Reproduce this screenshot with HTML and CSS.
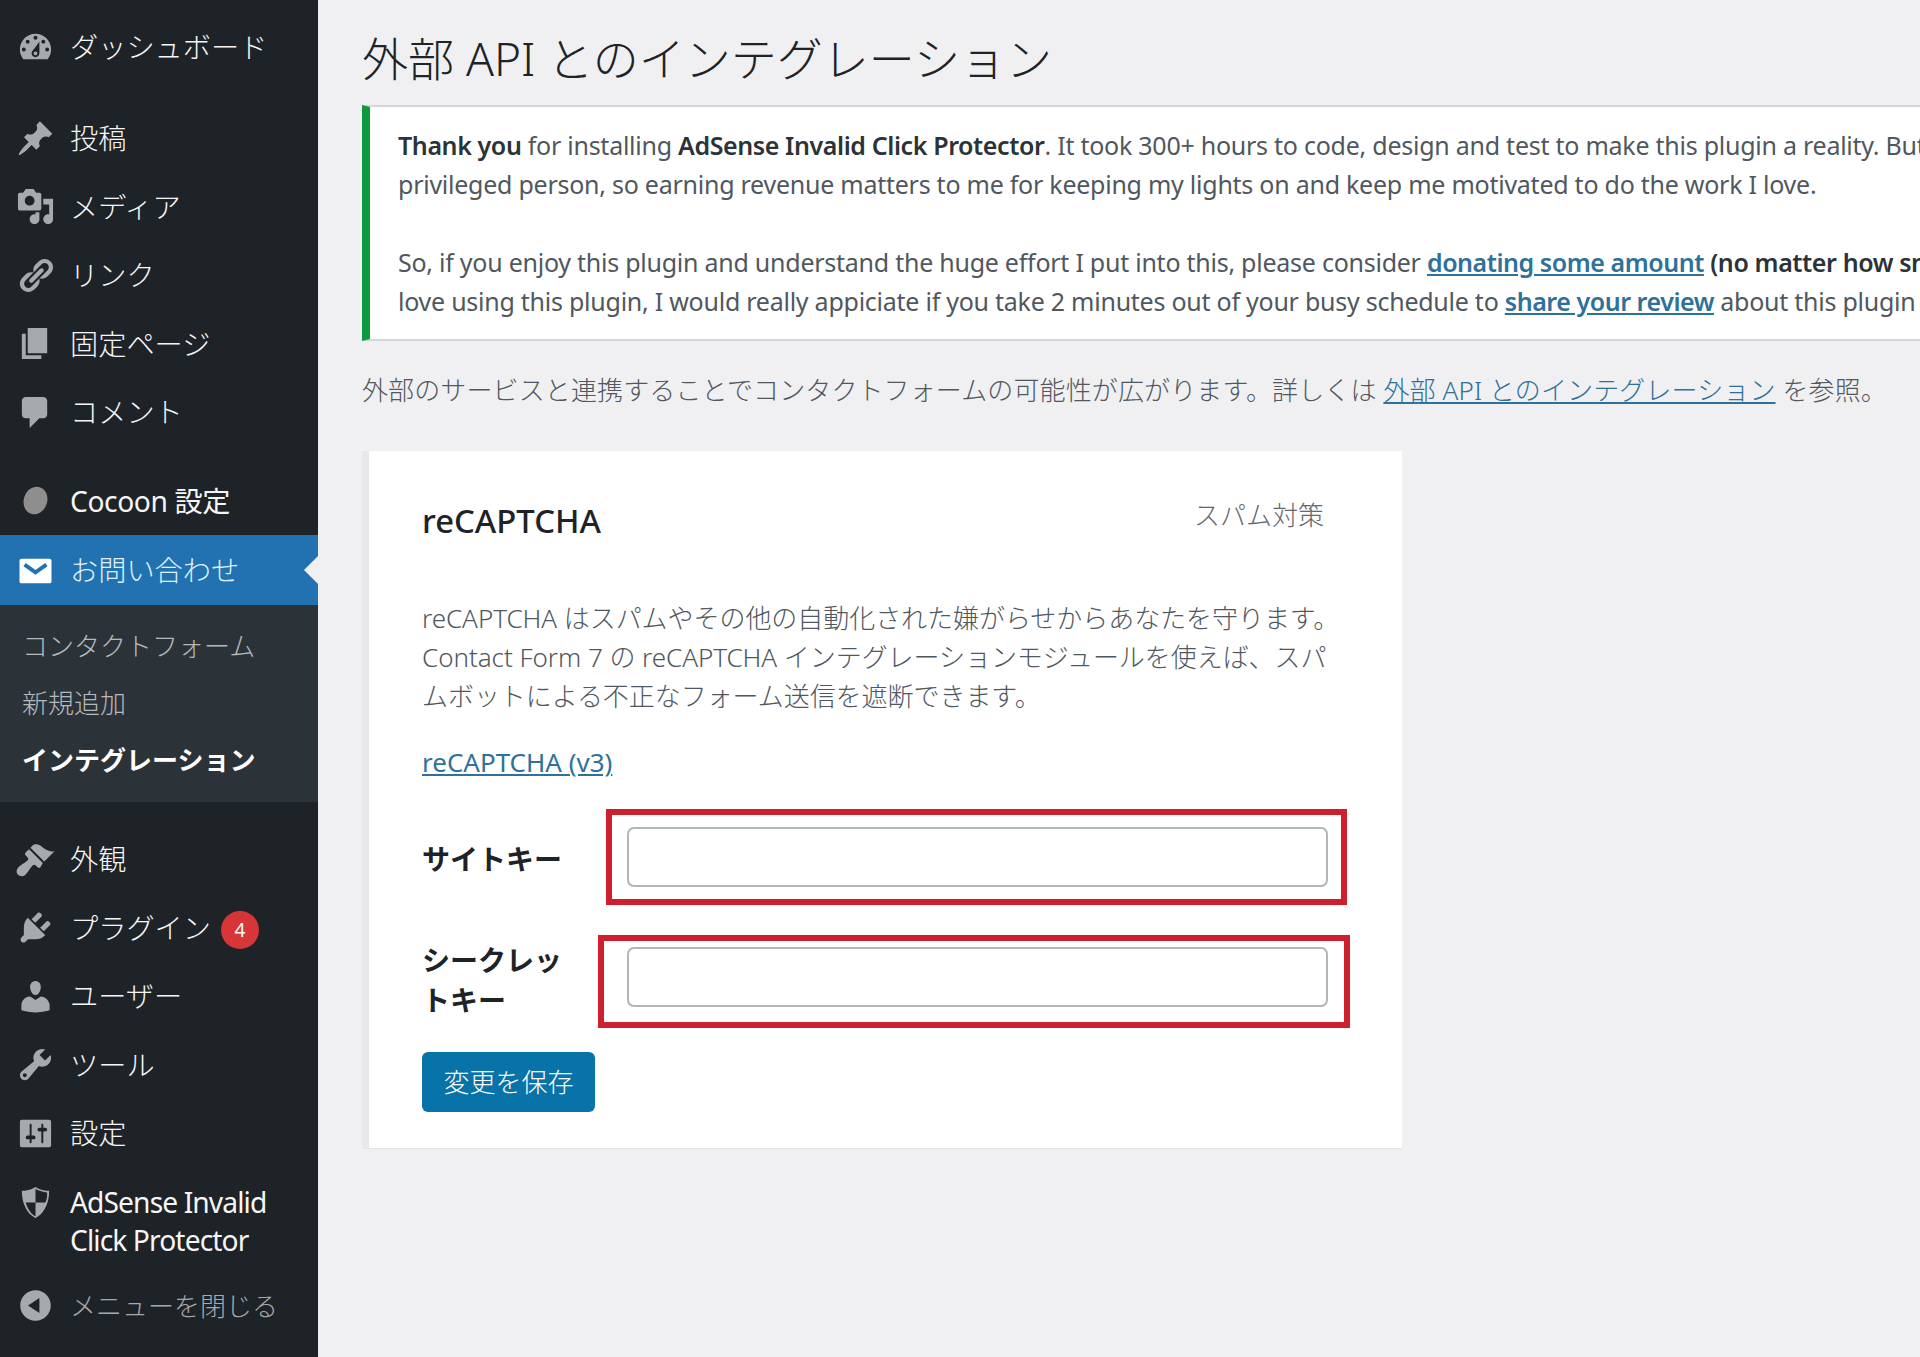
FILE: index.html
```html
<!DOCTYPE html>
<html lang="ja">
<head>
<meta charset="utf-8">
<title>外部 API とのインテグレーション</title>
<link rel="stylesheet" href="styles.css">
</head>
<body>
<div class="app">
<aside class="side">
  <nav class="menu">
    <a class="item item-first"><svg class="ico" viewBox="0 0 20 20"><path d="M3.76 16h12.48c1.1-1.37 1.76-3.11 1.76-5 0-4.42-3.58-8-8-8s-8 3.58-8 8c0 1.89.66 3.63 1.76 5zM10 4c.55 0 1 .45 1 1s-.45 1-1 1-1-.45-1-1 .45-1 1-1zM6 6c.55 0 1 .45 1 1s-.45 1-1 1-1-.45-1-1 .45-1 1-1zm8 0c.55 0 1 .45 1 1s-.45 1-1 1-1-.45-1-1 .45-1 1-1zm-5.37 5.55L12 7v6c0 1.1-.9 2-2 2s-2-.9-2-2c0-.57.24-1.08.63-1.45zM4 10c.55 0 1 .45 1 1s-.45 1-1 1-1-.45-1-1 .45-1 1-1zm12 0c.55 0 1 .45 1 1s-.45 1-1 1-1-.45-1-1 .45-1 1-1zm-5 3c0-.55-.45-1-1-1s-1 .45-1 1 .45 1 1 1 1-.45 1-1z"/></svg><span>ダッシュボード</span></a>
    <a class="item item-gap"><svg class="ico" viewBox="0 0 20 20"><path d="M10.44 3.02l1.82-1.82 6.36 6.35-1.83 1.82c-1.05-.68-2.48-.57-3.41.36l-.75.75c-.92.93-1.04 2.35-.35 3.41l-1.83 1.82-2.41-2.41-2.8 2.79c-.42.42-3.38 2.71-3.8 2.29s1.86-3.39 2.28-3.81l2.79-2.79L4.1 9.36l1.83-1.82c1.05.69 2.48.57 3.4-.36l.75-.75c.93-.92 1.05-2.35.36-3.41z"/></svg><span>投稿</span></a>
    <a class="item"><svg class="ico" viewBox="0 0 20 20"><path d="M13 11V4c0-.55-.45-1-1-1h-1.67L9 1H5L3.67 3H2c-.55 0-1 .45-1 1v7c0 .55.45 1 1 1h10c.55 0 1-.45 1-1zM7 4.5c1.38 0 2.5 1.12 2.5 2.5S8.38 9.5 7 9.5 4.5 8.38 4.5 7 5.62 4.5 7 4.5zM14 6h5v10.5c0 1.38-1.12 2.5-2.5 2.5S14 17.88 14 16.5s1.12-2.5 2.5-2.5c.17 0 .34.02.5.05V9h-3V6zm-4 8.05V13h2v3.5c0 1.38-1.12 2.5-2.5 2.5S7 17.88 7 16.5 8.12 14 9.5 14c.17 0 .34.02.5.05z"/></svg><span>メディア</span></a>
    <a class="item"><svg class="ico" viewBox="0 0 20 20"><path d="M17.74 2.76c1.68 1.69 1.68 4.41 0 6.1l-1.53 1.52c-1.12 1.12-2.7 1.47-4.14 1.09l2.62-2.61.76-.77.76-.76c.84-.84.84-2.2 0-3.04-.84-.85-2.2-.85-3.04 0l-.77.76-3.38 3.38c-.37-1.44-.02-3.02 1.1-4.14l1.52-1.53c1.69-1.68 4.42-1.68 6.1 0zM8.59 13.43l5.34-5.34c.42-.42.42-1.1 0-1.52-.44-.43-1.13-.39-1.53 0l-5.33 5.34c-.42.42-.42 1.1 0 1.52.44.43 1.13.39 1.52 0zm-.76 2.29l4.14-4.15c.38 1.44.03 3.02-1.09 4.14l-1.52 1.53c-1.69 1.68-4.41 1.68-6.1 0-1.68-1.68-1.68-4.42 0-6.1l1.53-1.52c1.12-1.12 2.7-1.47 4.14-1.1l-4.14 4.15c-.85.84-.85 2.2 0 3.05.84.84 2.2.84 3.04 0z"/></svg><span>リンク</span></a>
    <a class="item"><svg class="ico" viewBox="0 0 20 20"><path d="M6 15V2h10v13H6zm-1 1h8v2H3V5h2v11z"/></svg><span>固定ページ</span></a>
    <a class="item"><svg class="ico" viewBox="0 0 20 20"><path d="M5 2h9c1.1 0 2 .9 2 2v7c0 1.1-.9 2-2 2h-2l-5 5v-5H5c-1.1 0-2-.9-2-2V4c0-1.1.9-2 2-2z"/></svg><span>コメント</span></a>
    <a class="item item-gap-b"><svg class="ico ico-cocoon" viewBox="0 0 20 20"><ellipse cx="10" cy="10" rx="6" ry="7.2" transform="rotate(18 10 10)"/></svg><span class="latin">Cocoon 設定</span></a>
    <a class="item item-current"><svg class="ico ico-white" viewBox="0 0 20 20"><rect x="1.8" y="4" width="16.4" height="12.6" rx="1"/><path class="ico-flap" d="M4.4 7l5.6 4 5.6-4"/></svg><span>お問い合わせ</span><i class="pointer"></i></a>
    <div class="sub">
      <a class="sub-item">コンタクトフォーム</a>
      <a class="sub-item">新規追加</a>
      <a class="sub-item sub-current">インテグレーション</a>
    </div>
    <a class="item item-after-sub"><svg class="ico" viewBox="0 0 20 20"><path d="M14.48 11.06L7.41 3.99l1.5-1.5c.5-.56 2.3-.47 3.51.32 1.21.8 1.43 1.28 2.91 2.1 1.18.64 2.45 1.26 4.45.85zm-.71.71L6.7 4.7 4.93 6.47c-.39.39-.39 1.02 0 1.41l1.06 1.06c.39.39.39 1.03 0 1.42-.6.6-1.43 1.11-2.21 1.7-.75.53-1.63 1.04-2.39 1.8-1.4 1.39-1.33 3.01-.32 4.02 1.01 1 2.64 1.08 4.03-.32.76-.76 1.27-1.64 1.81-2.39.58-.78 1.09-1.61 1.69-2.21.39-.39 1.02-.39 1.41 0l1.07 1.06c.39.39 1.02.39 1.41 0z"/></svg><span>外観</span></a>
    <a class="item"><svg class="ico" viewBox="0 0 20 20"><path d="M13.11 4.36L9.87 7.6 8 5.73l3.24-3.24c.35-.34 1.05-.2 1.56.32.52.51.66 1.21.31 1.55zm-8 1.77l.91-1.12 9.01 9.01-1.19.84c-.71.71-2.63 1.16-3.82 1.16H6.14L4.9 17.26c-.59.59-1.54.59-2.12 0-.59-.58-.59-1.53 0-2.12l1.24-1.24v-3.88c0-1.13.4-3.19 1.09-3.89zm7.26 3.97l3.24-3.24c.34-.35 1.04-.21 1.55.31.52.51.66 1.21.31 1.55l-3.24 3.25z"/></svg><span>プラグイン</span><b class="badge">4</b></a>
    <a class="item"><svg class="ico" viewBox="0 0 20 20"><path d="M10 9.25c-2.27 0-2.73-3.44-2.73-3.44C7 4.02 7.82 2 9.97 2c2.16 0 2.98 2.02 2.71 3.81 0 0-.41 3.44-2.68 3.44zm0 2.57L12.72 10c2.39 0 4.52 2.33 4.52 4.53v2.49s-3.65 1.13-7.24 1.13c-3.65 0-7.24-1.13-7.24-1.13v-2.49c0-2.25 1.94-4.48 4.47-4.48z"/></svg><span>ユーザー</span></a>
    <a class="item"><svg class="ico" viewBox="0 0 20 20"><path d="M16.68 9.77c-1.34 1.34-3.3 1.67-4.95.99l-5.41 6.52c-.99.99-2.59.99-3.58 0s-.99-2.59 0-3.57l6.52-5.42c-.68-1.65-.35-3.61.99-4.95 1.28-1.28 3.12-1.62 4.72-1.06l-2.89 2.89 2.82 2.82 2.86-2.87c.53 1.58.18 3.39-1.08 4.67zM3.81 16.21c.4.39 1.04.39 1.43 0 .4-.4.4-1.04 0-1.43-.39-.4-1.03-.4-1.43 0-.39.39-.39 1.03 0 1.43z"/></svg><span>ツール</span></a>
    <a class="item"><svg class="ico" viewBox="0 0 20 20"><path d="M18 16V4c0-.55-.45-1-1-1H3c-.55 0-1 .45-1 1v12c0 .55.45 1 1 1h14c.55 0 1-.45 1-1zM8 11h1c.55 0 1 .45 1 1s-.45 1-1 1H8v1.5c0 .28-.22.5-.5.5s-.5-.22-.5-.5V13H6c-.55 0-1-.45-1-1s.45-1 1-1h1V5.5c0-.28.22-.5.5-.5s.5.22.5.5V11zm5-2h-1c-.55 0-1-.45-1-1s.45-1 1-1h1V5.5c0-.28.22-.5.5-.5s.5.22.5.5V7h1c.55 0 1 .45 1 1s-.45 1-1 1h-1v5.5c0 .28-.22.5-.5.5s-.5-.22-.5-.5V9z"/></svg><span>設定</span></a>
    <a class="item item-two"><svg class="ico" viewBox="0 0 20 20"><path fill-rule="evenodd" d="M10 2s3 2 7 2c0 11-7 14-7 14S3 15 3 4c4 0 7-2 7-2zM10 10h5s1-1 1-5c0 0-5-1-6-2zM10 10H5c1 4 4 7 5 7z"/></svg><span class="latin-tight">AdSense Invalid<br>Click Protector</span></a>
    <a class="item item-collapse"><svg class="ico" viewBox="0 0 20 20"><path d="M10 2.16c4.33 0 7.84 3.51 7.84 7.84s-3.51 7.84-7.84 7.84S2.16 14.33 2.16 10 5.71 2.16 10 2.16zm2 11.72V6.12L6.18 9.97z"/></svg><span>メニューを閉じる</span></a>
  </nav>
</aside>
<main class="main">
  <h1 class="title">外部 API とのインテグレーション</h1>
  <section class="notice">
    <p><strong>Thank you</strong> for installing <strong>AdSense Invalid Click Protector</strong>. It took 300+ hours to code, design and test to make this plugin a reality. But<br>privileged person, so earning revenue matters to me for keeping my lights on and keep me motivated to do the work I love.</p>
    <p>So, if you enjoy this plugin and understand the huge effort I put into this, please consider <a class="link link-strong">donating some amount</a> <strong>(no matter how small)</strong><br>love using this plugin, I would really appiciate if you take 2 minutes out of your busy schedule to <a class="link link-strong">share your review</a> about this plugin</p>
  </section>
  <p class="intro">外部のサービスと連携することでコンタクトフォームの可能性が広がります。詳しくは <a class="link">外部 API とのインテグレーション</a> を参照。</p>
  <section class="card">
    <header class="card-head">
      <h2 class="card-title">reCAPTCHA</h2>
      <span class="card-tag">スパム対策</span>
    </header>
    <p class="card-text">reCAPTCHA はスパムやその他の自動化された嫌がらせからあなたを守ります。<br>Contact Form 7 の reCAPTCHA インテグレーションモジュールを使えば、スパ<br>ムボットによる不正なフォーム送信を遮断できます。</p>
    <p class="card-link"><a class="link">reCAPTCHA (v3)</a></p>
    <form class="form">
      <div class="row row-one">
        <label class="label" for="sitekey">サイトキー</label>
        <input class="field" id="sitekey" type="text">
        <i class="mark mark-one"></i>
      </div>
      <div class="row row-two">
        <label class="label" for="secret">シークレッ<br>トキー</label>
        <input class="field" id="secret" type="text">
        <i class="mark mark-two"></i>
      </div>
      <button class="save" type="button">変更を保存</button>
    </form>
  </section>
</main>
</div>
</body>
</html>
```

FILE: styles.css
```css
* { box-sizing: border-box; }
html, body { margin: 0; height: 100%; }
body {
  background: #f0f0f2;
  color: #50575e;
  font-family: "Noto Sans", "Noto Sans CJK JP", sans-serif;
  font-weight: 300;
  overflow: hidden;
}
.app { display: flex; height: 1357px; width: 1920px; overflow: hidden; }

/* sidebar */
.side { width: 318px; flex: none; background: #1d2327; padding-top: 13px; }
.menu { display: flex; flex-direction: column; }
.item {
  position: relative;
  display: flex;
  align-items: center;
  height: 68.5px;
  padding-left: 16px;
  gap: 15px;
  color: #f6f6f7;
  font-size: 28.2px;
  line-height: 38px;
  white-space: nowrap;
}
.item-gap { margin-top: 22.5px; }
.item-gap-b { margin-top: 20px; }
.item-after-sub { margin-top: 23px; }
.latin { font-weight: 400; letter-spacing: -0.4px; }
.latin-tight { font-weight: 400; letter-spacing: -0.9px; }
.ico { width: 39px; height: 39px; flex: none; fill: #a7aaad; }
.ico-cocoon { fill: #8e8e8e; }
.ico-white { fill: #fff; }
.ico-flap { fill: none; stroke: #2271b1; stroke-width: 2; }
.item-current { background: #2271b1; height: 70px; color: #dff1fd; }
.pointer {
  position: absolute;
  right: 0;
  top: 50%;
  margin-top: -14px;
  border: 14px solid transparent;
  border-right-color: #f0f0f2;
  border-left-width: 0;
}
.sub { background: #2c3338; padding: 13px 0 13px; display: flex; flex-direction: column; }
.sub-item {
  height: 57px;
  line-height: 57px;
  padding-left: 22px;
  font-size: 26px;
  color: #b4b9be;
}
.sub-current { color: #fff; font-weight: 700; }
.badge {
  width: 38px;
  height: 38px;
  margin: 4px 0 0 -5px;
  border-radius: 50%;
  background: #d63638;
  color: #fff;
  font-size: 19px;
  line-height: 38px;
  text-align: center;
}
.item-two { align-items: flex-start; height: 104px; padding-top: 15px; }
.item-collapse { color: #a7aaad; font-size: 26px; }

/* main */
.main { flex: 1; min-width: 0; padding: 28px 0 0 44px; overflow: hidden; }
.title {
  margin: 0 0 17px;
  font-size: 46px;
  line-height: 60px;
  font-weight: 300;
  color: #1d2327;
  white-space: nowrap;
}
.notice {
  width: 1600px;
  height: 236px;
  background: #fff;
  border-top: 2px solid #d4d5d6;
  border-bottom: 2px solid #d4d5d6;
  border-left: 8px solid #0d9a3c;
  padding: 19px 0 0 28px;
  font-size: 25px;
  font-weight: 400;
  line-height: 39px;
  letter-spacing: -0.25px;
  white-space: nowrap;
  overflow: hidden;
}
.notice p { margin: 0 0 39px; }
.notice strong { font-weight: 600; letter-spacing: -0.4px; color: #2c3338; }
.link { color: #2f7199; text-decoration: underline; }
.link-strong { font-weight: 600; letter-spacing: -0.45px; }
.intro {
  margin: 29px 0 41px;
  font-size: 26px;
  line-height: 40px;
  letter-spacing: 0.12px;
  white-space: nowrap;
}

/* card */
.card {
  width: 1040px;
  height: 698px;
  background: #fff;
  border-left: 7px solid #e8e8ea;
  border-bottom: 1px solid #e4e4e6;
  padding: 44px 78px 0 53px;
}
.card-head { display: flex; justify-content: space-between; align-items: flex-start; }
.card-title {
  margin: 4px 0 0;
  font-size: 32.8px;
  line-height: 44px;
  font-weight: 500;
  color: #1d2327;
}
.card-tag { font-size: 26px; line-height: 40px; color: #646970; }
.card-text { margin: 56px 0 0; font-size: 26px; line-height: 39px; letter-spacing: -0.05px; white-space: nowrap; }
.card-link { margin: 26px 0 0; font-size: 26px; line-height: 40px; font-weight: 400; }
.form { margin-top: 45px; display: flex; flex-direction: column; align-items: flex-start; }
.row { position: relative; display: flex; }
.row-one { align-items: center; }
.row-one .label { padding-top: 3px; }
.row-two { align-items: flex-start; margin-top: 53px; }
.label {
  width: 205px;
  font-size: 28px;
  line-height: 40px;
  font-weight: 700;
  color: #1d2327;
}
.field {
  display: block;
  width: 701px;
  height: 60px;
  background: #fff;
  border: 2px solid #b4b5b7;
  border-radius: 7px;
}
.row-two .field { margin-top: 7px; }
.mark { position: absolute; border: 6px solid #cf1f2e; }
.mark-one { left: 184px; top: -18px; width: 741px; height: 96px; }
.mark-two { left: 176px; top: -5px; width: 752px; height: 93px; }
.save {
  width: 173px;
  height: 60px;
  margin-top: 32px;
  padding: 0 0 3px;
  border: 0;
  border-radius: 6px;
  background: #0873a8;
  color: #fff;
  font: inherit;
  font-size: 26px;
}
```
